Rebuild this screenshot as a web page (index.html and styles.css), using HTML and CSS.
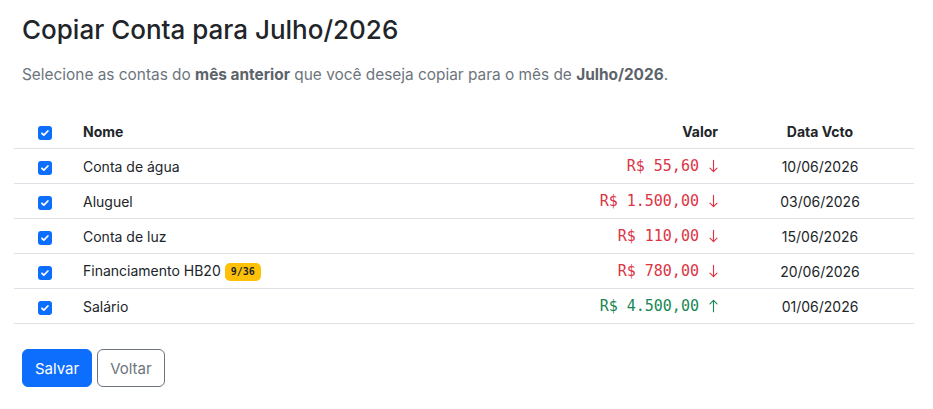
FILE: index.html
```html
<!DOCTYPE html>
<html lang="pt-BR">
<head>
  <meta charset="UTF-8" />
  <title>Copiar Conta</title>
  <link rel="stylesheet" href="styles.css">
</head>
<body>
  <div class="page">
    <h1 class="title">Copiar Conta para Julho/2026</h1>
    <p class="lead">Selecione as contas do <b>mês anterior</b> que você deseja copiar para o mês de <b>Julho/2026</b>.</p>

    <table class="accounts">
      <thead>
        <tr>
          <th class="col-check"><span class="check"><svg viewBox="0 0 16 16"><path d="M4.5 8.3l2.2 2.2 4.6-4.8" /></svg></span></th>
          <th class="col-name">Nome</th>
          <th class="col-value">Valor</th>
          <th class="col-date">Data Vcto</th>
        </tr>
      </thead>
      <tbody>
        <tr>
          <td class="col-check"><span class="check"><svg viewBox="0 0 16 16"><path d="M4.5 8.3l2.2 2.2 4.6-4.8" /></svg></span></td>
          <td class="col-name">Conta de água</td>
          <td class="col-value money out">R$ 55,60 <svg class="arrow" viewBox="0 0 10 16"><path d="M5 1.5v13M1 10.5l4 4 4-4" /></svg></td>
          <td class="col-date">10/06/2026</td>
        </tr>
        <tr>
          <td class="col-check"><span class="check"><svg viewBox="0 0 16 16"><path d="M4.5 8.3l2.2 2.2 4.6-4.8" /></svg></span></td>
          <td class="col-name">Aluguel</td>
          <td class="col-value money out">R$ 1.500,00 <svg class="arrow" viewBox="0 0 10 16"><path d="M5 1.5v13M1 10.5l4 4 4-4" /></svg></td>
          <td class="col-date">03/06/2026</td>
        </tr>
        <tr>
          <td class="col-check"><span class="check"><svg viewBox="0 0 16 16"><path d="M4.5 8.3l2.2 2.2 4.6-4.8" /></svg></span></td>
          <td class="col-name">Conta de luz</td>
          <td class="col-value money out">R$ 110,00 <svg class="arrow" viewBox="0 0 10 16"><path d="M5 1.5v13M1 10.5l4 4 4-4" /></svg></td>
          <td class="col-date">15/06/2026</td>
        </tr>
        <tr>
          <td class="col-check"><span class="check"><svg viewBox="0 0 16 16"><path d="M4.5 8.3l2.2 2.2 4.6-4.8" /></svg></span></td>
          <td class="col-name">Financiamento HB20 <span class="badge">9/36</span></td>
          <td class="col-value money out">R$ 780,00 <svg class="arrow" viewBox="0 0 10 16"><path d="M5 1.5v13M1 10.5l4 4 4-4" /></svg></td>
          <td class="col-date">20/06/2026</td>
        </tr>
        <tr>
          <td class="col-check"><span class="check"><svg viewBox="0 0 16 16"><path d="M4.5 8.3l2.2 2.2 4.6-4.8" /></svg></span></td>
          <td class="col-name">Salário</td>
          <td class="col-value money in">R$ 4.500,00 <svg class="arrow" viewBox="0 0 10 16"><path d="M5 14.5v-13M1 5.5l4-4 4 4" /></svg></td>
          <td class="col-date">01/06/2026</td>
        </tr>
      </tbody>
    </table>

    <div class="actions">
      <button class="btn btn-primary">Salvar</button>
      <button class="btn btn-outline">Voltar</button>
    </div>
  </div>
</body>
</html>
```

FILE: styles.css
```css
body {
  margin: 0;
  background: #fff;
  color: #212529;
  font-family: Inter, "Noto Sans", sans-serif;
}

.page {
  padding: 14px 22px;
}

.title {
  margin: 0 0 20px;
  font-size: 26px;
  font-weight: 500;
  line-height: 1.2;
  color: #212529;
}

.lead {
  margin: 0 0 30px;
  font-size: 15.4px;
  color: #6c757d;
}

.lead b {
  font-weight: 700;
  color: #5c636a;
}

.accounts {
  width: calc(100% + 11px);
  margin: 0 0 0 -8px;
  border-collapse: collapse;
  font-size: 14px;
}

.accounts th,
.accounts td {
  height: 34px;
  padding: 0 8px;
  border-bottom: 1px solid #dee2e6;
  vertical-align: middle;
}

.accounts th {
  font-weight: 700;
  text-align: left;
}

.col-check {
  width: 45px;
  text-align: center !important;
}

.col-value {
  text-align: right !important;
}

.col-date {
  width: 172px;
  text-align: center !important;
}

.check {
  display: inline-block;
  width: 14px;
  height: 14px;
  border-radius: 3px;
  background: #0d6efd;
  vertical-align: middle;
}

.check svg {
  display: block;
  width: 14px;
  height: 14px;
  fill: none;
  stroke: #fff;
  stroke-width: 2;
  stroke-linecap: round;
  stroke-linejoin: round;
}

.money {
  font-family: "DejaVu Sans Mono", "Liberation Mono", monospace;
  font-size: 15px;
  white-space: nowrap;
}

.money.out {
  color: #dc3545;
}

.money.in {
  color: #198754;
}

.arrow {
  width: 9px;
  height: 14px;
  margin-left: 1px;
  vertical-align: -2px;
  fill: none;
  stroke: currentColor;
  stroke-width: 1.3;
  stroke-linecap: round;
  stroke-linejoin: round;
}

.badge {
  display: inline-block;
  padding: 3px 6px;
  border-radius: 5px;
  background: #ffc107;
  color: #212529;
  font-family: "DejaVu Sans Mono", monospace;
  font-size: 10px;
  font-weight: 700;
  line-height: 1.2;
  vertical-align: 1px;
}

.actions {
  display: flex;
  gap: 5px;
  margin-top: 25px;
}

.btn {
  padding: 0 12px;
  height: 38px;
  border-radius: 6px;
  font-family: inherit;
  font-size: 15px;
  cursor: pointer;
}

.btn-primary {
  background: #0d6efd;
  border: 1px solid #0d6efd;
  color: #fff;
}

.btn-outline {
  background: #fff;
  border: 1px solid #6c757d;
  color: #6c757d;
}
```
